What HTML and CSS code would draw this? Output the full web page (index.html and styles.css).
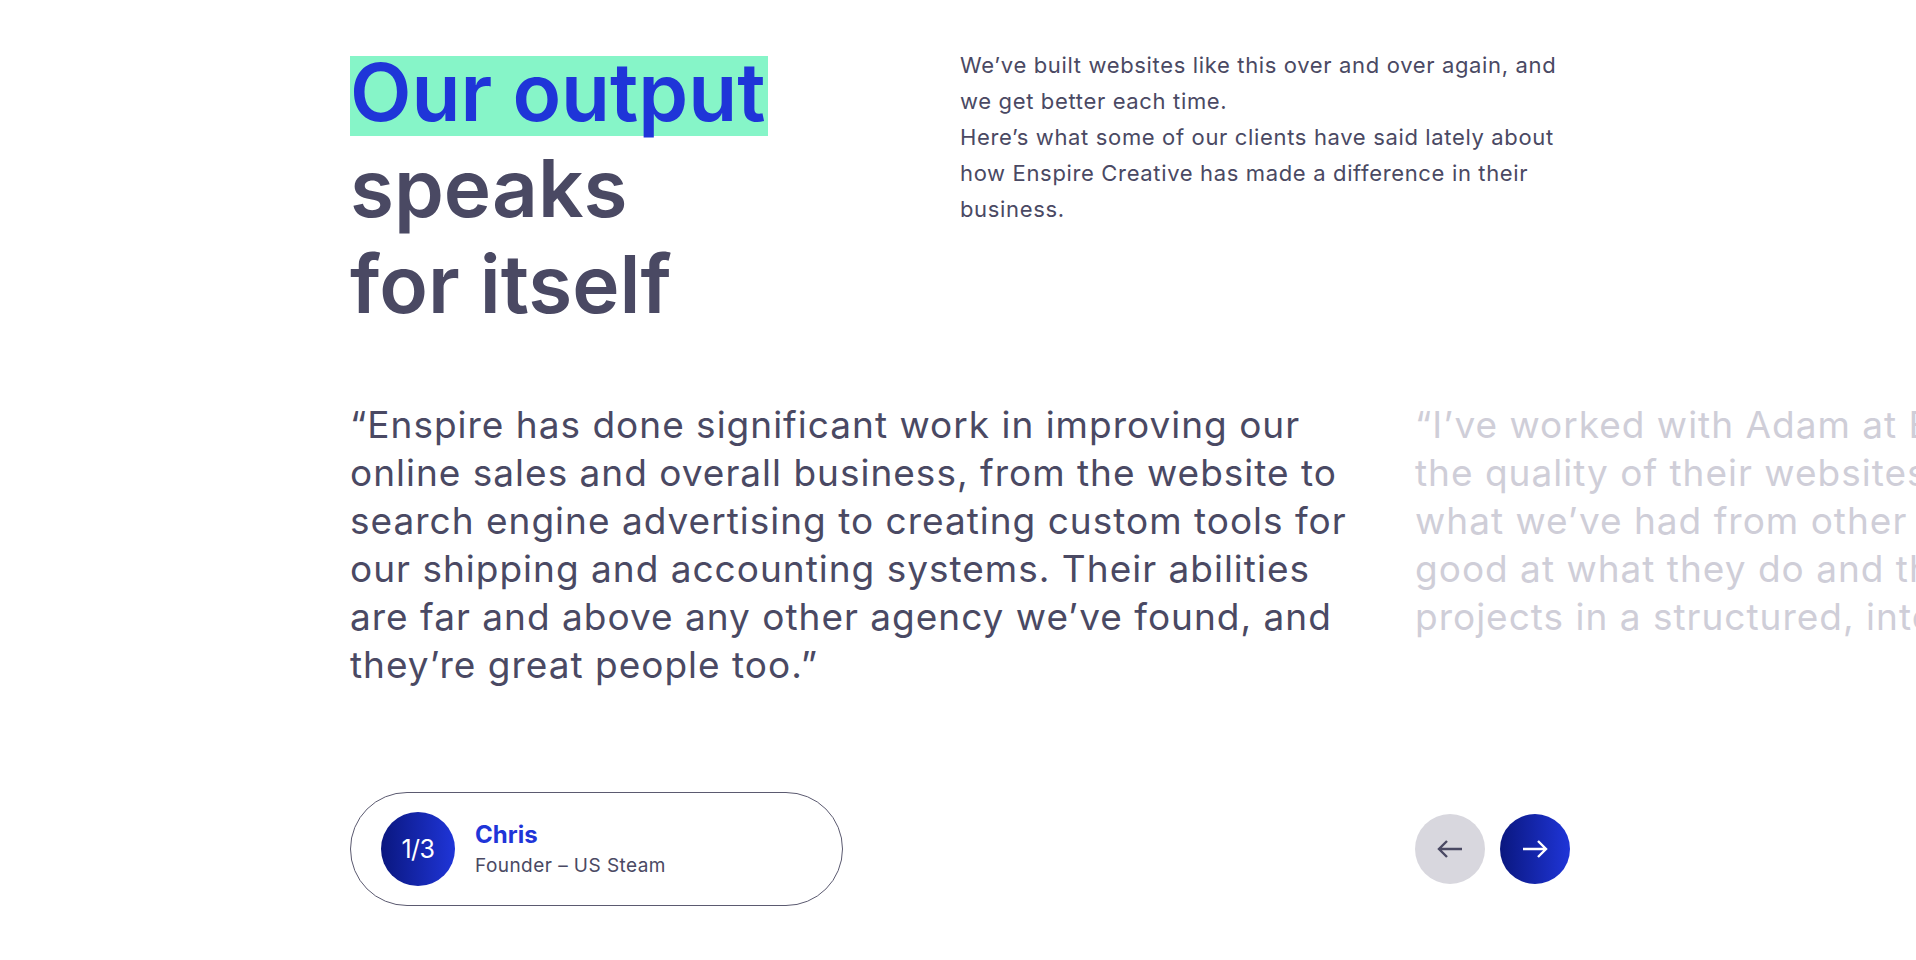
FILE: index.html
```html
<!DOCTYPE html>
<html lang="en">
<head>
<meta charset="utf-8">
<title>Our output speaks for itself</title>
<link rel="stylesheet" href="styles.css">
</head>
<body>
<section class="testimonials">
  <div class="intro">
    <h2 class="headline"><span class="hl">Our output</span><br>speaks<br>for itself</h2>
    <div class="intro-text">
      <p>We’ve built websites like this over and over again, and we get better each time.</p>
      <p>Here’s what some of our clients have said lately about how Enspire Creative has made a difference in their business.</p>
    </div>
  </div>

  <div class="slider">
    <blockquote class="slide active">“Enspire has done significant work in improving our online sales and overall business, from the website to search engine advertising to creating custom tools for our shipping and accounting systems. Their abilities are far and above any other agency we’ve found, and they’re great people too.”</blockquote>
    <blockquote class="slide next">“I’ve worked with Adam at Enspire for several years now, and<br>the quality of their websites is consistently well above<br>what we’ve had from other agencies. They’re incredibly<br>good at what they do and they manage our<br>projects in a structured, intelligent way.”</blockquote>
  </div>

  <div class="controls">
    <div class="author">
      <div class="counter">1/3</div>
      <div class="author-info">
        <div class="author-name">Chris</div>
        <div class="author-role">Founder – US Steam</div>
      </div>
    </div>
    <div class="nav">
      <button class="nav-btn prev" aria-label="Previous">
        <svg width="28" height="20" viewBox="0 0 28 20"><path d="M26 10H3M11 2L3 10l8 8" fill="none" stroke="currentColor" stroke-width="2.4"/></svg>
      </button>
      <button class="nav-btn next-btn" aria-label="Next">
        <svg width="28" height="20" viewBox="0 0 28 20"><path d="M2 10h23M17 2l8 8-8 8" fill="none" stroke="currentColor" stroke-width="2.4"/></svg>
      </button>
    </div>
  </div>
</section>
</body>
</html>
```
FILE: styles.css
```css
html, body {
  margin: 0;
  padding: 0;
  overflow-x: hidden;
  background: #ffffff;
}

body {
  font-family: Inter, "Noto Sans", sans-serif;
  color: #4a4963;
}

.testimonials {
  width: 1220px;
  margin-left: 350px;
  padding-top: 44px;
}

.intro {
  display: grid;
  grid-template-columns: 610px 1fr;
}

.headline {
  margin: 0;
  font-size: 80px;
  line-height: 96px;
  font-weight: 600;
  letter-spacing: 0px;
  color: #4a4963;
}

.hl {
  display: inline-block;
  line-height: 72px;
  padding-bottom: 8px;
  padding-right: 3px;
  background: #86f5c8;
  color: #1f35d8;
}

.intro-text {
  margin-top: 3px;
  font-size: 22px;
  line-height: 36px;
  letter-spacing: 0.65px;
  color: #4a4963;
}

.intro-text p {
  margin: 0;
}

.slider {
  display: flex;
  gap: 65px;
  margin-top: 69px;
}

.slide {
  flex: 0 0 1000px;
  margin: 0;
  font-size: 37px;
  line-height: 48px;
  font-weight: 400;
  letter-spacing: 1px;
}

.slide.active {
  color: #4a4963;
}

.slide.next {
  color: #cfced8;
  white-space: nowrap;
}

.controls {
  display: flex;
  justify-content: space-between;
  align-items: center;
  margin-top: 103px;
}

.author {
  box-sizing: border-box;
  width: 493px;
  height: 114px;
  border: 1px solid #5b5a70;
  border-radius: 57px;
  display: flex;
  align-items: center;
  padding-left: 30px;
  gap: 20px;
}

.counter {
  width: 74px;
  height: 74px;
  border-radius: 50%;
  background: linear-gradient(90deg, #0a177f 0%, #1f35d8 100%);
  color: #ffffff;
  display: flex;
  align-items: center;
  justify-content: center;
  font-size: 25px;
  letter-spacing: -0.5px;
}

.author-name {
  font-size: 24px;
  font-weight: 700;
  color: #1f35d8;
  line-height: 30px;
}

.author-role {
  margin-top: 3px;
  font-size: 19px;
  line-height: 26px;
  letter-spacing: 0.45px;
  color: #4a4963;
}

.nav {
  display: flex;
  gap: 15px;
}

.nav-btn {
  width: 70px;
  height: 70px;
  border: none;
  border-radius: 50%;
  padding: 0;
  display: flex;
  align-items: center;
  justify-content: center;
  cursor: pointer;
}

.nav-btn.prev {
  background: #d8d7de;
  color: #4a4963;
}

.nav-btn.next-btn {
  background: linear-gradient(90deg, #0a177f 0%, #1f35d8 100%);
  color: #ffffff;
}
```
